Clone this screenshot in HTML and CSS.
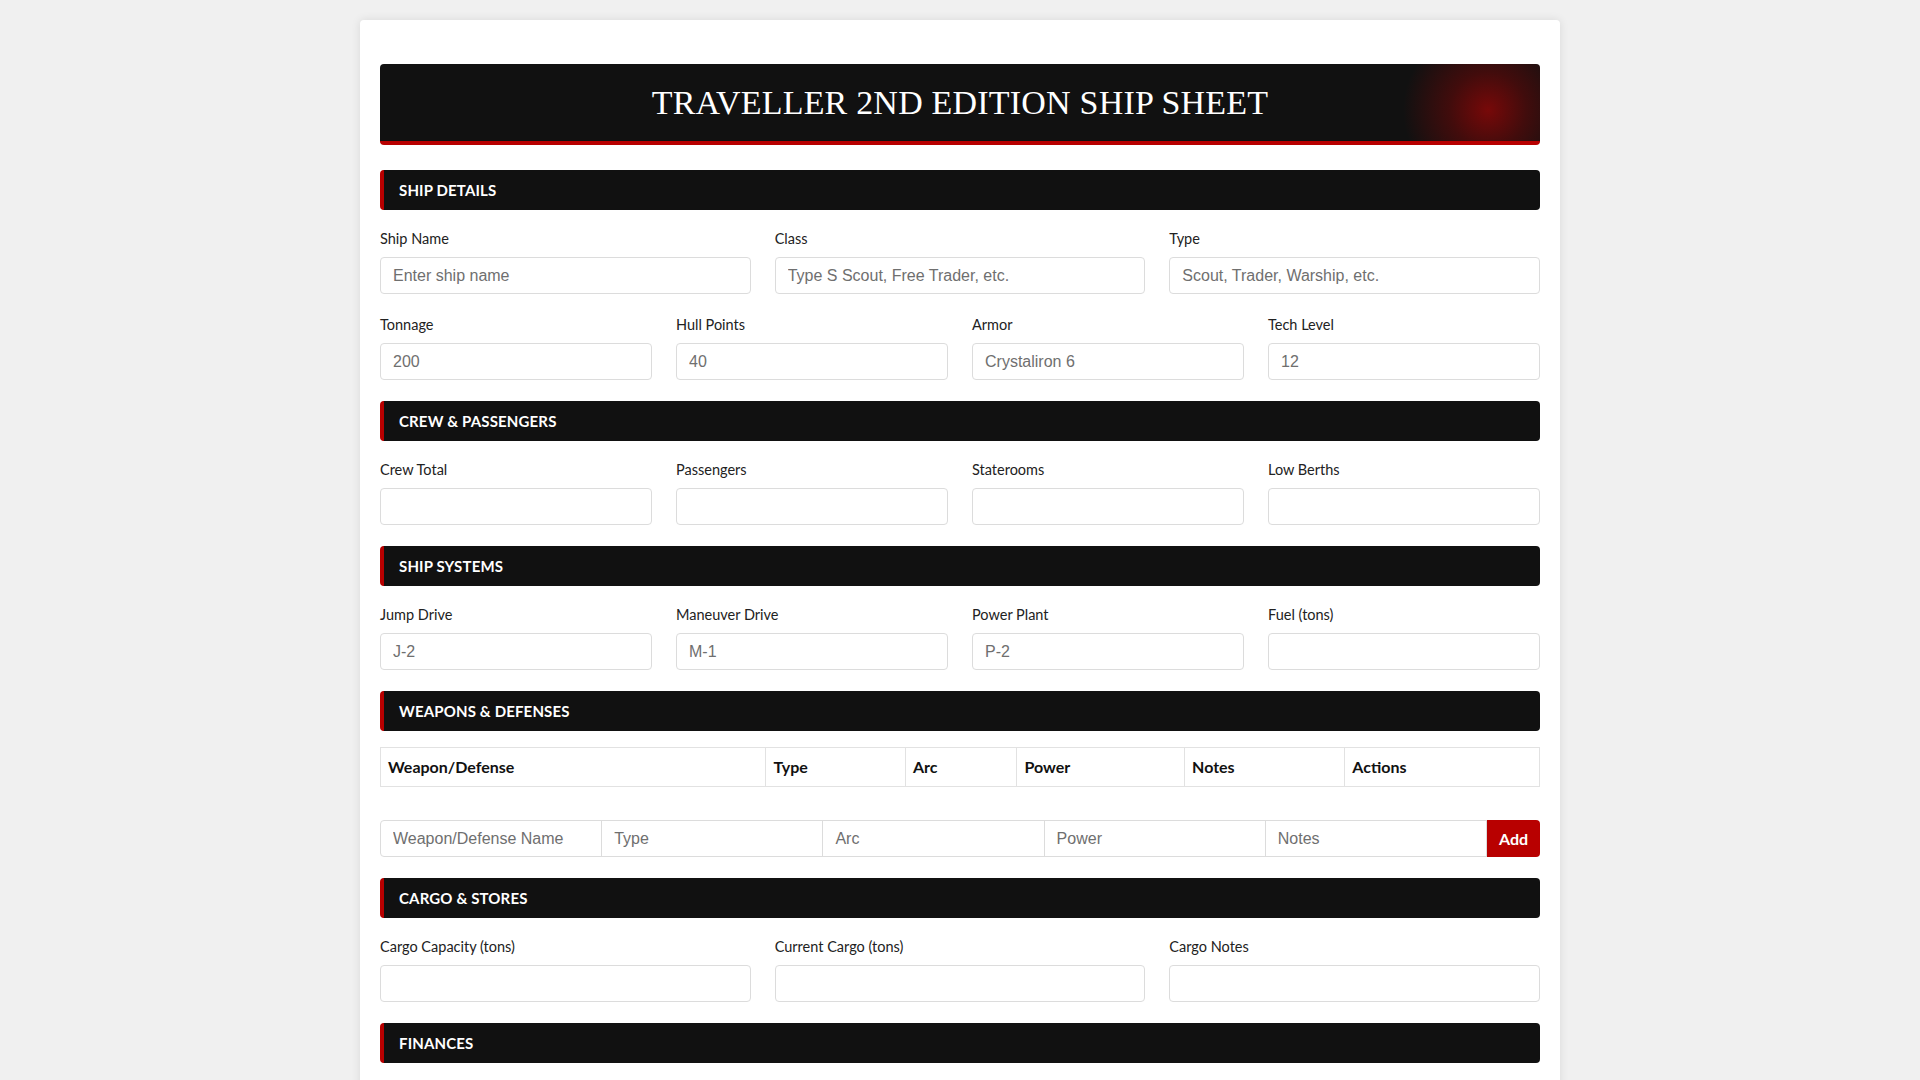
FILE: index.html
```html
<!DOCTYPE html>
<html lang="en">
<head>
<meta charset="utf-8">
<title>Traveller 2nd Edition Ship Sheet</title>
<link rel="stylesheet" href="styles.css">
</head>
<body>
<div class="sheet">
  <header class="sheet-header">
    <h1 class="sheet-title">Traveller 2nd Edition Ship Sheet</h1>
  </header>

  <section class="section">
    <h2 class="section-title">Ship Details</h2>
    <div class="row cols-3">
      <div class="field"><label>Ship Name</label><input type="text" placeholder="Enter ship name"></div>
      <div class="field"><label>Class</label><input type="text" placeholder="Type S Scout, Free Trader, etc."></div>
      <div class="field"><label>Type</label><input type="text" placeholder="Scout, Trader, Warship, etc."></div>
    </div>
    <div class="row cols-4">
      <div class="field"><label>Tonnage</label><input type="text" placeholder="200"></div>
      <div class="field"><label>Hull Points</label><input type="text" placeholder="40"></div>
      <div class="field"><label>Armor</label><input type="text" placeholder="Crystaliron 6"></div>
      <div class="field"><label>Tech Level</label><input type="text" placeholder="12"></div>
    </div>
  </section>

  <section class="section">
    <h2 class="section-title">Crew &amp; Passengers</h2>
    <div class="row cols-4">
      <div class="field"><label>Crew Total</label><input type="text"></div>
      <div class="field"><label>Passengers</label><input type="text"></div>
      <div class="field"><label>Staterooms</label><input type="text"></div>
      <div class="field"><label>Low Berths</label><input type="text"></div>
    </div>
  </section>

  <section class="section">
    <h2 class="section-title">Ship Systems</h2>
    <div class="row cols-4">
      <div class="field"><label>Jump Drive</label><input type="text" placeholder="J-2"></div>
      <div class="field"><label>Maneuver Drive</label><input type="text" placeholder="M-1"></div>
      <div class="field"><label>Power Plant</label><input type="text" placeholder="P-2"></div>
      <div class="field"><label>Fuel (tons)</label><input type="text"></div>
    </div>
  </section>

  <section class="section">
    <h2 class="section-title">Weapons &amp; Defenses</h2>
    <table class="weapons-table">
      <thead>
        <tr>
          <th class="c-name">Weapon/Defense</th>
          <th class="c-type">Type</th>
          <th class="c-arc">Arc</th>
          <th class="c-power">Power</th>
          <th class="c-notes">Notes</th>
          <th class="c-actions">Actions</th>
        </tr>
      </thead>
      <tbody></tbody>
    </table>
    <div class="add-row">
      <input type="text" placeholder="Weapon/Defense Name">
      <input type="text" placeholder="Type">
      <input type="text" placeholder="Arc">
      <input type="text" placeholder="Power">
      <input type="text" placeholder="Notes">
      <button type="button" class="add-btn">Add</button>
    </div>
  </section>

  <section class="section">
    <h2 class="section-title">Cargo &amp; Stores</h2>
    <div class="row cols-3">
      <div class="field"><label>Cargo Capacity (tons)</label><input type="text"></div>
      <div class="field"><label>Current Cargo (tons)</label><input type="text"></div>
      <div class="field"><label>Cargo Notes</label><input type="text"></div>
    </div>
  </section>

  <section class="section">
    <h2 class="section-title">Finances</h2>
  </section>
</div>
</body>
</html>
```

FILE: styles.css
```css
html, body {
  margin: 0;
  padding: 0;
}

body {
  background: #f0f0f0;
  padding: 20px 0;
  font-family: Lato, "Open Sans", sans-serif;
  color: #222;
}

.sheet {
  width: 1200px;
  margin: 0 auto;
  background: #fff;
  box-sizing: border-box;
  padding: 44px 20px 40px;
  box-shadow: 0 0 10px rgba(0, 0, 0, 0.1);
  border-radius: 4px;
}

.sheet-header {
  height: 77px;
  background:
    radial-gradient(circle 85px at 1108px 46px, rgba(125, 8, 8, 0.95) 0%, rgba(105, 8, 8, 0.55) 45%, rgba(17, 17, 17, 0) 100%),
    #111;
  border-bottom: 4px solid #b80000;
  border-radius: 4px;
  display: flex;
  align-items: center;
  justify-content: center;
  margin-bottom: 25px;
}

.sheet-title {
  margin: 0;
  font-family: "Liberation Serif", "Times New Roman", serif;
  font-weight: normal;
  font-size: 34px;
  letter-spacing: 0.2px;
  text-transform: uppercase;
  color: #fff;
}

.section-title {
  height: 40px;
  margin: 0 0 19px;
  padding-left: 15px;
  background: #111;
  color: #fff;
  border-left: 4px solid #b80000;
  border-radius: 4px;
  display: flex;
  align-items: center;
  font-family: Lato, sans-serif;
  font-weight: bold;
  font-size: 15px;
  letter-spacing: 0.15px;
  text-transform: uppercase;
}

.row {
  display: grid;
  gap: 24px;
  margin-bottom: 21px;
}

.cols-3 {
  grid-template-columns: repeat(3, 1fr);
}

.cols-4 {
  grid-template-columns: repeat(4, 1fr);
}

.field label {
  display: block;
  font-family: Lato, sans-serif;
  font-size: 14.5px;
  line-height: 19px;
  margin-bottom: 9px;
  color: #222;
}

.field input,
.add-row input {
  display: block;
  width: 100%;
  box-sizing: border-box;
  height: 37px;
  padding: 0 12px;
  border: 1px solid #dcdcdc;
  border-radius: 4px;
  background: #fff;
  font-family: "Liberation Sans", Arial, sans-serif;
  font-size: 16px;
  color: #333;
  outline: none;
}

.field input::placeholder,
.add-row input::placeholder {
  color: #6f6f6f;
}

.weapons-table {
  width: 100%;
  border-collapse: collapse;
  table-layout: fixed;
  margin-top: -3px;
  margin-bottom: 33px;
}

.weapons-table th {
  box-sizing: border-box;
  border: 1px solid #e2e2e2;
  padding: 9px 7px;
  line-height: 20px;
  text-align: left;
  font-family: Lato, sans-serif;
  font-weight: bold;
  font-size: 16px;
  color: #111;
  background: #fff;
}

.c-name { width: 33.26%; }
.c-type { width: 12.04%; }
.c-arc { width: 9.61%; }
.c-power { width: 14.47%; }
.c-notes { width: 13.83%; }
.c-actions { width: 16.79%; }

.add-row {
  display: flex;
  margin-bottom: 21px;
}

.add-row input {
  flex: 1 1 0;
  min-width: 0;
  border-radius: 0;
  margin-left: -1px;
}

.add-row input:first-child {
  margin-left: 0;
  border-radius: 4px 0 0 4px;
}

.add-btn {
  flex: 0 0 53px;
  height: 37px;
  border: none;
  border-radius: 0 4px 4px 0;
  background: #b80000;
  color: #fff;
  font-family: Lato, sans-serif;
  font-weight: bold;
  font-size: 16px;
  padding: 0;
  cursor: pointer;
}
```
